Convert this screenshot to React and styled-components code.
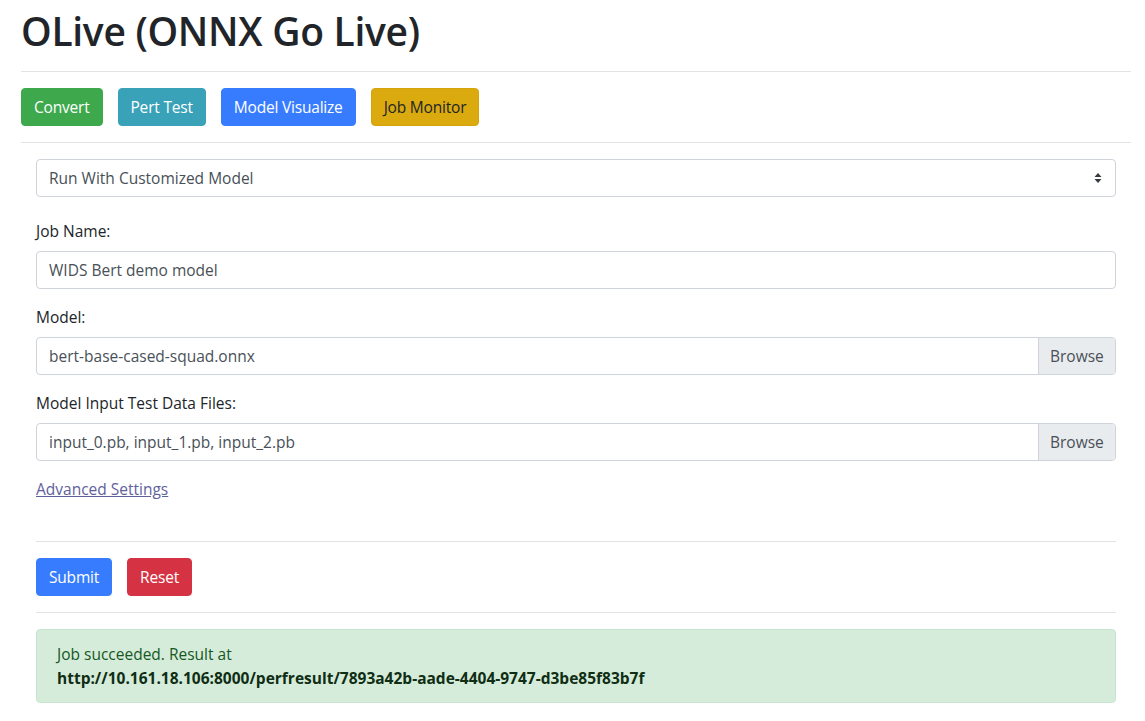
import React from "react";
import styled, { createGlobalStyle } from "styled-components";

const Global = createGlobalStyle`
  * { box-sizing: border-box; }
  html, body { margin: 0; padding: 0; background: #fff; }
  body {
    font-family: "Segoe UI", "Open Sans", "Noto Sans", sans-serif;
    font-size: 16px;
    line-height: 1.5;
    color: #212529;
  }
`;

const Page = styled.div`
  padding: 7px 14px 0 21px;
  width: 1145px;
`;

const Title = styled.h1`
  margin: 0 0 8px;
  font-size: 39px;
  font-weight: 600;
  line-height: 48px;
  color: #212529;
  letter-spacing: -0.3px;
`;

const Rule = styled.hr`
  border: 0;
  border-top: 1px solid #e1e3e6;
  margin: ${(p) => p.$m || "16px 0"};
  height: 0;
`;

const Toolbar = styled.div`
  display: flex;
  gap: 15px;
`;

const palette = {
  success: { bg: "#3da94c", border: "#3da94c", color: "#fff" },
  info: { bg: "#39a1b8", border: "#39a1b8", color: "#fff" },
  primary: { bg: "#377cff", border: "#377cff", color: "#fff" },
  warning: { bg: "#dbaa0e", border: "#d5a40c", color: "#212529" },
  danger: { bg: "#d53343", border: "#d53343", color: "#fff" },
};

const Button = styled.button`
  font-family: inherit;
  font-size: 15.5px;
  line-height: 24px;
  padding: 6px 12px;
  height: 38px;
  border-radius: 4px;
  border: 1px solid ${(p) => palette[p.$v].border};
  background: ${(p) => palette[p.$v].bg};
  color: ${(p) => palette[p.$v].color};
  cursor: pointer;
  white-space: nowrap;
  letter-spacing: -0.2px;
`;

const Form = styled.div`
  padding: 0 15px;
  display: flex;
  flex-direction: column;
`;

const SelectWrap = styled.div`
  position: relative;
  margin-bottom: 22px;
`;

const Select = styled.div`
  height: 38px;
  border: 1px solid #ced4da;
  border-radius: 4px;
  padding: 6px 12px;
  font-size: 15.5px;
  line-height: 24px;
  color: #495057;
`;

const Arrows = styled.span`
  position: absolute;
  right: 14px;
  top: 13px;
  width: 8px;
  height: 12px;
  display: flex;
`;

const Group = styled.div`
  display: flex;
  flex-direction: column;
  margin-bottom: 16px;
`;

const Label = styled.label`
  font-size: 15.5px;
  line-height: 24px;
  margin-bottom: 8px;
  color: #212529;
`;

const Input = styled.div`
  height: 38px;
  border: 1px solid #ced4da;
  border-radius: 4px;
  padding: 6px 12px;
  font-size: 15.5px;
  line-height: 24px;
  color: #495057;
`;

const FileInput = styled.div`
  height: 38px;
  border: 1px solid #ced4da;
  border-radius: 4px;
  display: flex;
  overflow: hidden;
`;

const FileName = styled.div`
  flex: 1;
  padding: 5px 12px;
  font-size: 15.5px;
  line-height: 26px;
  color: #495057;
`;

const Browse = styled.div`
  width: 77px;
  background: #e9ecef;
  border-left: 1px solid #ced4da;
  padding: 5px 0 5px 11px;
  font-size: 15.5px;
  line-height: 26px;
  color: #495057;
`;

const Link = styled.a`
  font-size: 15.5px;
  line-height: 24px;
  color: #5f619c;
  text-decoration: underline;
  align-self: flex-start;
  margin-bottom: 40px;
`;

const Alert = styled.div`
  background: #d6ecdb;
  border: 1px solid #c6e5cd;
  border-radius: 4px;
  padding: 12px 20px;
  color: #155724;
  font-size: 15.5px;
  line-height: 24px;
`;

const Strong = styled.div`
  font-weight: 700;
  color: #0f2e14;
`;

export default function App() {
  return (
    <Page>
      <Global />
      <Title>OLive (ONNX Go Live)</Title>
      <Rule />
      <Toolbar>
        <Button $v="success">Convert</Button>
        <Button $v="info">Pert Test</Button>
        <Button $v="primary">Model Visualize</Button>
        <Button $v="warning">Job Monitor</Button>
      </Toolbar>
      <Rule />
      <Form>
        <SelectWrap>
          <Select>Run With Customized Model</Select>
          <Arrows>
            <svg width="8" height="12" viewBox="0 0 8 12">
              <path d="M4 1 L7.5 5 H0.5 Z M4 11 L0.5 7 H7.5 Z" fill="#343a40" />
            </svg>
          </Arrows>
        </SelectWrap>
        <Group>
          <Label>Job Name:</Label>
          <Input>WIDS Bert demo model</Input>
        </Group>
        <Group>
          <Label>Model:</Label>
          <FileInput>
            <FileName>bert-base-cased-squad.onnx</FileName>
            <Browse>Browse</Browse>
          </FileInput>
        </Group>
        <Group>
          <Label>Model Input Test Data Files:</Label>
          <FileInput>
            <FileName>input_0.pb, input_1.pb, input_2.pb</FileName>
            <Browse>Browse</Browse>
          </FileInput>
        </Group>
        <Link href="#">Advanced Settings</Link>
        <Rule $m="0 0 16px" />
        <Toolbar>
          <Button $v="primary">Submit</Button>
          <Button $v="danger">Reset</Button>
        </Toolbar>
        <Rule />
        <Alert>
          <div>Job succeeded. Result at</div>
          <Strong>http://10.161.18.106:8000/perfresult/7893a42b-aade-4404-9747-d3be85f83b7f</Strong>
        </Alert>
      </Form>
    </Page>
  );
}
